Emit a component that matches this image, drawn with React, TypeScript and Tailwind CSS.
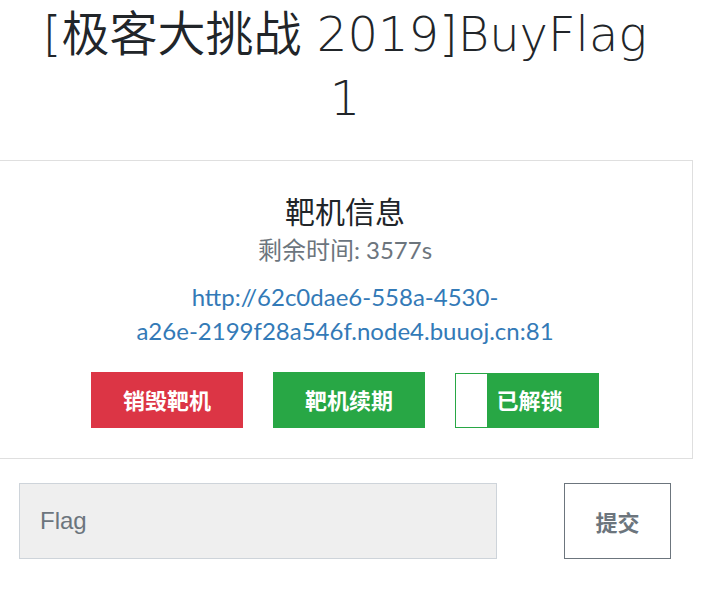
const body = '"Lato", "Noto Sans CJK SC", sans-serif';

export default function App() {
  return (
    <div className="min-h-screen bg-white overflow-hidden">
      <div className="w-[696px] -ml-[3px]" style={{ fontFamily: body }}>
        {/* Title */}
        <h1
          className="text-center text-[48px] leading-[64px] pt-[2px] text-[#212529] font-light"
          style={{ fontFamily: '"DejaVu Sans", "Noto Sans CJK SC", sans-serif' }}
        >
          [<span className="font-[350]">极客大挑战</span> 2019]BuyFlag
          <br />1
        </h1>

        {/* 靶机信息 card */}
        <div className="mt-[30px] h-[299px] border border-[#dfdfdf] flex flex-col items-center pt-[30px]">
          <h3 className="text-[30px] leading-[40px] text-[#212529]">靶机信息</h3>
          <p className="mt-[4px] text-[24px] leading-[30px] text-[#6c757d]">剩余时间: 3577s</p>
          <a className="mt-[15px] text-center text-[24px] leading-[34px] text-[#337ab7]">
            http://62c0dae6-558a-4530-
            <br />
            a26e-2199f28a546f.node4.buuoj.cn:81
          </a>
          <div className="mt-[24px] flex gap-[30px] text-white font-bold text-[22px]">
            <button className="w-[152px] h-[56px] bg-[#dc3545]">销毁靶机</button>
            <button className="w-[152px] h-[56px] bg-[#28a745]">靶机续期</button>
            <button className="mt-px w-[144px] h-[55px] bg-[#28a745] border border-[#28a745] flex">
              <span className="w-[31px] h-full bg-white" />
              <span className="flex-1 flex items-center justify-center pr-[26px]">已解锁</span>
            </button>
          </div>
        </div>

        {/* flag form */}
        <div className="mt-[24px] flex items-center">
          <div
            className="ml-[22px] w-[478px] h-[76px] bg-[#efefef] border border-[#ced4da] flex items-center pl-[20px] text-[24px] text-[#6c757d]"
            style={{ fontFamily: '"Liberation Sans", Arial, sans-serif' }}
          >
            Flag
          </div>
          <button
            className="ml-[67px] w-[107px] h-[76px] border border-[#6c757d] bg-white text-[#6c757d] text-[22px] font-bold"
            style={{ fontFamily: '"Noto Sans CJK SC", sans-serif' }}
          >
            提交
          </button>
        </div>
      </div>
    </div>
  );
}
